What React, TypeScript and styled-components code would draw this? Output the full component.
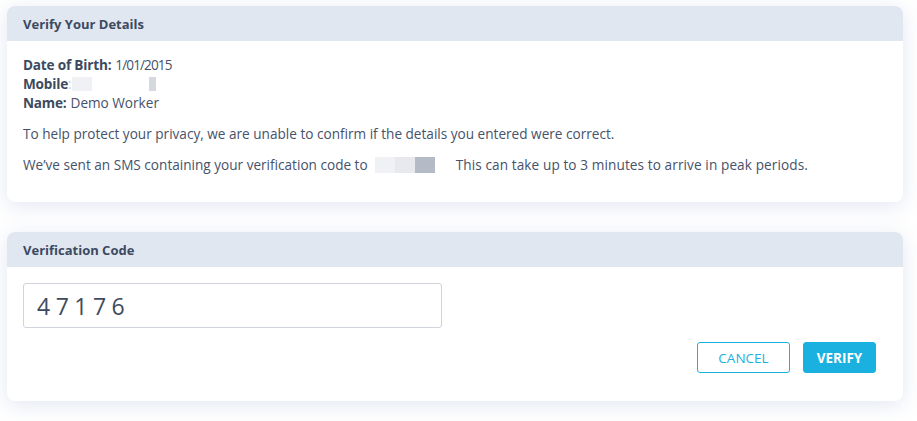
import React from "react";
import styled, { createGlobalStyle } from "styled-components";

const Global = createGlobalStyle`
  html, body { margin: 0; padding: 0; background: #ffffff; }
  body { font-family: "Open Sans", "Liberation Sans", sans-serif; color: #3e4a5e; }
  * { box-sizing: border-box; }
`;

const Page = styled.div`
  display: flex;
  flex-direction: column;
  gap: 30px;
  padding: 6px 14px 20px 7px;
`;

const Card = styled.section`
  background: #fff;
  border-radius: 8px;
  box-shadow: 0 4px 20px rgba(140, 160, 205, 0.25);
  overflow: hidden;
`;

const CardHeader = styled.div`
  height: 35px;
  background: #e1e7f1;
  display: flex;
  align-items: center;
  padding: 0 16px;
  font-size: 13px;
  font-weight: 700;
  color: #3c4a60;
`;

const CardBody = styled.div<{ $pad?: string }>`
  padding: ${(p) => p.$pad || "16px"};
  font-size: 13.6px;
  color: #46526a;
`;

const Line = styled.div`
  line-height: 19px;
  display: flex;
  align-items: center;
`;

const Label = styled.b<{ $tight?: boolean }>`
  font-weight: 700;
  color: #3c4a60;
  margin-right: ${(p) => (p.$tight ? 0 : 4)}px;
  letter-spacing: -0.2px;
`;

const Digits = styled.span`
  letter-spacing: -0.9px;
`;

const Colon = styled.span`
  color: #c9ced8;
`;

const Para = styled.p`
  margin: 12px 0 0;
  line-height: 19px;
  display: flex;
  align-items: center;
  white-space: nowrap;
`;

const After = styled.span`
  margin-left: 21px;
  letter-spacing: 0.1px;
`;

const Mask = styled.span<{ $w: number; $c: string; $ml?: number; $h?: number }>`
  display: inline-block;
  width: ${(p) => p.$w}px;
  height: ${(p) => p.$h || 15}px;
  background: ${(p) => p.$c};
  margin-left: ${(p) => p.$ml || 0}px;
`;

const CodeInput = styled.input`
  width: 419px;
  height: 45px;
  border: 1px solid #cfd4dc;
  border-radius: 3px;
  padding: 0 13px;
  font-family: "Open Sans", "Liberation Sans", sans-serif;
  font-size: 23px;
  letter-spacing: 5.5px;
  color: #3e4a5e;
  outline: none;
`;

const Actions = styled.div`
  display: flex;
  justify-content: flex-end;
  gap: 13px;
  margin-top: 14px;
  padding-right: 11px;
`;

const Button = styled.button<{ $primary?: boolean }>`
  height: 31px;
  width: ${(p) => (p.$primary ? 73 : 93)}px;
  padding: 0;
  border-radius: 3px;
  font-family: "Open Sans", "Liberation Sans", sans-serif;
  font-size: 13.5px;
  font-weight: ${(p) => (p.$primary ? 700 : 500)};
  border: 1px solid #1ab1e0;
  background: ${(p) => (p.$primary ? "#1ab1e0" : "#fff")};
  color: ${(p) => (p.$primary ? "#fff" : "#1ab1e0")};
  cursor: pointer;
`;

export default function App() {
  return (
    <>
      <Global />
      <Page>
        <Card>
          <CardHeader>Verify Your Details</CardHeader>
          <CardBody $pad="14px 16px 28px">
            <Line>
              <Label>Date of Birth:</Label>
              <Digits>1/01/2015</Digits>
            </Line>
            <Line>
              <Label $tight>Mobile</Label>
              <Colon>:</Colon>
              <Mask $w={20} $c="#f0f1f4" $h={14} />
              <Mask $w={7} $c="#d5d8de" $ml={57} $h={14} />
            </Line>
            <Line>
              <Label>Name:</Label>Demo Worker
            </Line>
            <Para>
              To help protect your privacy, we are unable to confirm if the details you entered were correct.
            </Para>
            <Para>
              We’ve sent an SMS containing your verification code to
              <Mask $w={20} $c="#f0f1f4" $ml={7} $h={16} />
              <Mask $w={20} $c="#e7e9ee" $h={16} />
              <Mask $w={20} $c="#b4bac6" $h={16} />
              <After>This can take up to 3 minutes to arrive in peak periods.</After>
            </Para>
          </CardBody>
        </Card>
        <Card>
          <CardHeader>Verification Code</CardHeader>
          <CardBody $pad="16px 16px 28px">
            <CodeInput defaultValue="47176" />
            <Actions>
              <Button>CANCEL</Button>
              <Button $primary>VERIFY</Button>
            </Actions>
          </CardBody>
        </Card>
      </Page>
    </>
  );
}
